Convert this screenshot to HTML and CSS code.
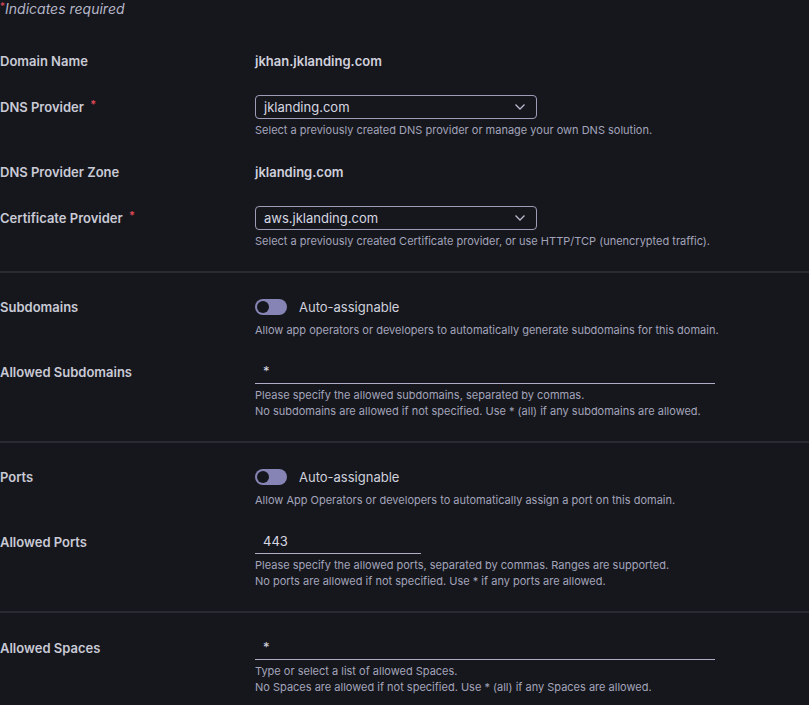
FILE: index.html
```html
<!DOCTYPE html>
<html>
<head>
<meta charset="utf-8">
<link rel="stylesheet" href="styles.css">
</head>
<body>
<div class="form">
  <p class="required-note"><span class="req">*</span>Indicates required</p>

  <section class="group">
    <div class="row">
      <div class="label">Domain Name</div>
      <div class="field"><div class="value">jkhan.jklanding.com</div></div>
    </div>
    <div class="row">
      <div class="label">DNS Provider <span class="req">*</span></div>
      <div class="field">
        <div class="select"><span>jklanding.com</span>
          <svg class="chev" width="12" height="8" viewBox="0 0 12 8"><path d="M1.5 1.5 L6 6 L10.5 1.5" fill="none" stroke="#b9b9d0" stroke-width="1.3"/></svg>
        </div>
        <div class="help">Select a previously created DNS provider or manage your own DNS solution.</div>
      </div>
    </div>
    <div class="row">
      <div class="label">DNS Provider Zone</div>
      <div class="field"><div class="value">jklanding.com</div></div>
    </div>
    <div class="row">
      <div class="label">Certificate Provider <span class="req">*</span></div>
      <div class="field">
        <div class="select"><span>aws.jklanding.com</span>
          <svg class="chev" width="12" height="8" viewBox="0 0 12 8"><path d="M1.5 1.5 L6 6 L10.5 1.5" fill="none" stroke="#b9b9d0" stroke-width="1.3"/></svg>
        </div>
        <div class="help">Select a previously created Certificate provider, or use HTTP/TCP (unencrypted traffic).</div>
      </div>
    </div>
  </section>

  <hr class="divider">

  <section class="group">
    <div class="row">
      <div class="label">Subdomains</div>
      <div class="field">
        <div class="toggle-line"><span class="toggle"><span class="knob"></span></span><span class="toggle-label">Auto-assignable</span></div>
        <div class="help">Allow app operators or developers to automatically generate subdomains for this domain.</div>
      </div>
    </div>
    <div class="row">
      <div class="label">Allowed Subdomains</div>
      <div class="field">
        <div class="input wide">*</div>
        <div class="help lines">Please specify the allowed subdomains, separated by commas.<br>No subdomains are allowed if not specified. Use * (all) if any subdomains are allowed.</div>
      </div>
    </div>
  </section>

  <hr class="divider">

  <section class="group">
    <div class="row">
      <div class="label">Ports</div>
      <div class="field">
        <div class="toggle-line"><span class="toggle"><span class="knob"></span></span><span class="toggle-label">Auto-assignable</span></div>
        <div class="help">Allow App Operators or developers to automatically assign a port on this domain.</div>
      </div>
    </div>
    <div class="row">
      <div class="label">Allowed Ports</div>
      <div class="field">
        <div class="input narrow">443</div>
        <div class="help lines">Please specify the allowed ports, separated by commas. Ranges are supported.<br>No ports are allowed if not specified. Use * if any ports are allowed.</div>
      </div>
    </div>
  </section>

  <hr class="divider">

  <section class="group last">
    <div class="row">
      <div class="label">Allowed Spaces</div>
      <div class="field">
        <div class="input wide">*</div>
        <div class="help lines">Type or select a list of allowed Spaces.<br>No Spaces are allowed if not specified. Use * (all) if any Spaces are allowed.</div>
      </div>
    </div>
  </section>
</div>
</body>
</html>
```

FILE: styles.css
```css
html, body {
  margin: 0;
  padding: 0;
  background: #16171c;
}
body {
  font-family: Inter, "Open Sans", "Liberation Sans", sans-serif;
  color: #c9cad6;
  width: 809px;
  height: 705px;
  overflow: hidden;
}
.form {
  display: flex;
  flex-direction: column;
}
.required-note {
  margin: 0;
  font-style: italic;
  font-size: 14px;
  line-height: 18px;
  color: #b4b5c6;
}
.req {
  color: #e0495a;
  font-size: 11px;
  line-height: 0;
  vertical-align: 4px;
  margin-left: 3px;
}
.required-note .req {
  font-style: normal;
  font-size: 10px;
  margin-left: 0;
}
.group {
  display: flex;
  flex-direction: column;
  gap: 22px;
  padding: 22px 0;
}
.form > .required-note + .group { padding-top: 31px; }
.group.last { padding-top: 23px; }
.row {
  display: grid;
  grid-template-columns: 255px 1fr;
  align-items: start;
}
.label {
  font-size: 13px;
  font-weight: 600;
  line-height: 24px;
  color: #c9cad6;
}
.field {
  display: flex;
  flex-direction: column;
}
.value {
  font-size: 13px;
  font-weight: 600;
  line-height: 24px;
  color: #d0d1dc;
}
.select {
  box-sizing: border-box;
  width: 282px;
  height: 24px;
  border: 1px solid #9d9db8;
  border-radius: 4px;
  display: flex;
  align-items: center;
  justify-content: space-between;
  padding: 0 10px 0 8px;
  font-size: 13px;
  color: #d6d7e2;
}
.chev { display: block; }
.help {
  margin-top: 3px;
  font-size: 11px;
  line-height: 16px;
  color: #a3a4bb;
}
.toggle-line {
  height: 24px;
  display: flex;
  align-items: center;
  gap: 12px;
}
.toggle {
  box-sizing: border-box;
  width: 32px;
  height: 16px;
  border-radius: 8px;
  background: #8584b4;
  padding: 2px;
  display: flex;
  align-items: center;
}
.knob {
  width: 12px;
  height: 12px;
  border-radius: 50%;
  background: #16171c;
}
.toggle-label {
  font-size: 13px;
  color: #d0d1dc;
}
.input {
  box-sizing: border-box;
  height: 24px;
  border-bottom: 1px solid #aeaec6;
  padding: 0 8px;
  font-size: 13px;
  line-height: 23px;
  color: #d6d7e2;
}
.input.wide { width: 460px; }
.input.narrow { width: 166px; }
.divider {
  margin: 0;
  border: 0;
  height: 2px;
  background: #2a2b32;
}
```
